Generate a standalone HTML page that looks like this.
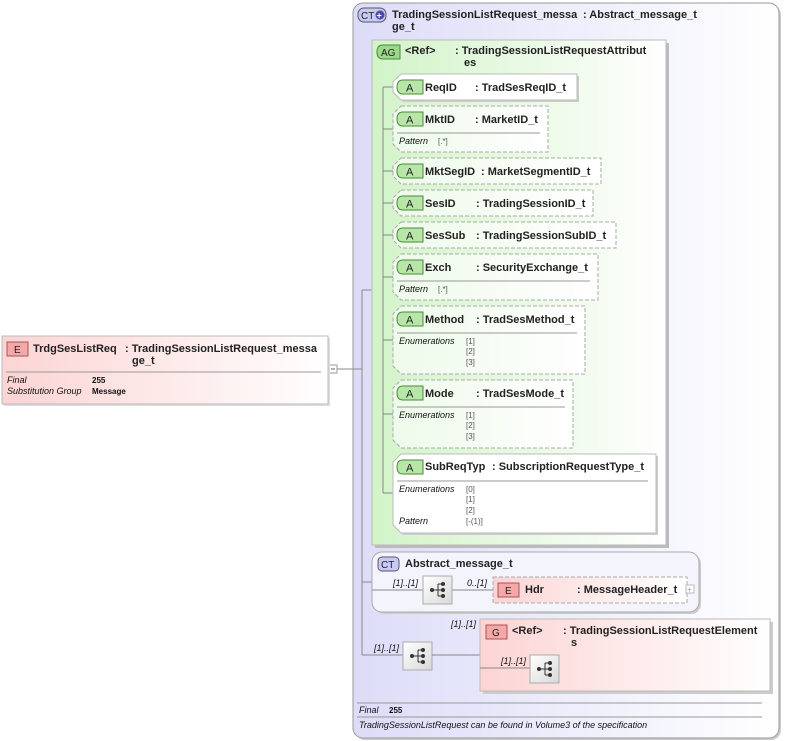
<!DOCTYPE html>
<html><head><meta charset="utf-8"><style>
html,body{margin:0;padding:0;background:#fff;width:785px;height:741px;overflow:hidden}
svg text{font-family:"Liberation Sans",Arial,sans-serif}
.b{font-size:11px;font-weight:bold;fill:#222}
.i{font-size:9px;font-style:italic;fill:#111}
.v{font-size:8px;fill:#555}
.vb{font-size:8px;font-weight:bold;fill:#111}
</style></head><body>
<svg width="785" height="741" xmlns="http://www.w3.org/2000/svg">
<defs>
<linearGradient id="ct" x1="0" x2="1"><stop offset="0" stop-color="#dcdcf8"/><stop offset="1" stop-color="#ffffff"/></linearGradient>
<linearGradient id="ag" x1="0" x2="1"><stop offset="0" stop-color="#d2f3c8"/><stop offset="1" stop-color="#ffffff"/></linearGradient>
<linearGradient id="el" x1="0" x2="1"><stop offset="0" stop-color="#fcd4d4"/><stop offset="1" stop-color="#ffffff"/></linearGradient>
<linearGradient id="at" x1="0" x2="1"><stop offset="0" stop-color="#eefaea"/><stop offset="1" stop-color="#ffffff"/></linearGradient>
<linearGradient id="sq" x1="0" x2="1" y1="0" y2="1"><stop offset="0" stop-color="#ffffff"/><stop offset="1" stop-color="#d8d8d8"/></linearGradient>
<g id="seq"><rect x="0" y="0" width="29" height="28" fill="url(#sq)" stroke="#aaa"/><line x1="9" y1="14" x2="15" y2="14" stroke="#333"/><line x1="15" y1="8" x2="15" y2="20" stroke="#333"/><line x1="15" y1="8" x2="19" y2="8" stroke="#333"/><line x1="15" y1="14" x2="19" y2="14" stroke="#333"/><line x1="15" y1="20" x2="19" y2="20" stroke="#333"/><circle cx="9" cy="14" r="2" fill="#333"/><circle cx="20" cy="8" r="2" fill="#333"/><circle cx="20" cy="14" r="2" fill="#333"/><circle cx="20" cy="20" r="2" fill="#333"/></g>
<g id="abadge"><path d="M6,0 H26 V14 H6 Q0,14 0,7 Q0,0 6,0 Z" fill="#b8e6a8" stroke="#4a8a3a"/><text x="9" y="11.5" style="font-size:11px;fill:#222">A</text></g>
</defs>

<rect x="355" y="5" width="426" height="735" rx="10" fill="#ccc"/>
<rect x="353" y="3" width="426" height="735" rx="10" fill="url(#ct)" stroke="#999"/>
<rect x="358" y="8" width="28" height="14" rx="6" fill="#c8c8f4" stroke="#556"/>
<text x="361" y="19" style="font-size:10px;fill:#222">CT</text><circle cx="380" cy="15" r="4.5" fill="#4a4aa8"/><text x="376.5" y="18.5" style="font-size:9px;fill:#fff;font-weight:bold">+</text>
<text class="b" x="392" y="18">TradingSessionListRequest_messa</text>
<text class="b" x="392" y="30">ge_t</text>
<text class="b" x="583" y="18">: Abstract_message_t</text>

<line x1="330" y1="369" x2="362" y2="369" stroke="#888"/>
<line x1="362" y1="290" x2="362" y2="655" stroke="#888"/>
<line x1="362" y1="290" x2="372" y2="290" stroke="#888"/>
<line x1="362" y1="582" x2="372" y2="582" stroke="#888"/>
<line x1="362" y1="655" x2="403" y2="655" stroke="#888"/>
<rect x="329" y="365" width="8" height="8" fill="#fff" stroke="#999"/><line x1="331" y1="369" x2="335" y2="369" stroke="#666"/>

<rect x="375" y="43" width="294" height="505" fill="#bbb"/>
<rect x="372" y="40" width="294" height="505" fill="url(#ag)" stroke="#bbb"/>
<path d="M383,45 H400 V59 H383 Q377,59 377,52 Q377,45 383,45 Z" fill="#9ad88a" stroke="#4a8a3a"/>
<text x="381" y="56" style="font-size:10px;fill:#222">AG</text>
<text class="b" x="405" y="54">&lt;Ref&gt;</text>
<text class="b" x="455" y="54">: TradingSessionListRequestAttribut</text>
<text class="b" x="464" y="66">es</text>
<line x1="383" y1="87" x2="383" y2="493" stroke="#888"/>

<g stroke="#888">
<line x1="383" y1="87" x2="393" y2="87"/><line x1="383" y1="129" x2="393" y2="129"/><line x1="383" y1="171" x2="393" y2="171"/><line x1="383" y1="203" x2="393" y2="203"/><line x1="383" y1="235" x2="393" y2="235"/><line x1="383" y1="277" x2="393" y2="277"/><line x1="383" y1="340" x2="393" y2="340"/><line x1="383" y1="414" x2="393" y2="414"/><line x1="383" y1="493" x2="393" y2="493"/>
</g>

<path d="M403,76 H579 V102 H403 L395,94 V84 Z" fill="#ccc"/>
<path d="M401,74 H577 V100 H401 L393,92 V82 Z" fill="#fff" stroke="#bbb"/>
<use href="#abadge" x="397" y="80"/><text class="b" x="425" y="91">ReqID</text><text class="b" x="475" y="91">: TradSesReqID_t</text>

<g fill="url(#at)" stroke="#aaa" stroke-dasharray="4,2">
<path d="M401,106 H548 V152 H401 L393,144 V114 Z"/>
<path d="M401,158 H601 V184 H401 L393,176 V166 Z"/>
<path d="M401,190 H593 V216 H401 L393,208 V198 Z"/>
<path d="M401,222 H616 V248 H401 L393,240 V230 Z"/>
<path d="M401,254 H598 V300 H401 L393,292 V262 Z"/>
<path d="M401,306 H585 V374 H401 L393,366 V314 Z"/>
<path d="M401,380 H573 V448 H401 L393,440 V388 Z"/>
</g>
<path d="M403,456 H658 V535 H403 L395,527 V464 Z" fill="#ccc"/>
<path d="M401,454 H656 V533 H401 L393,525 V462 Z" fill="#fff" stroke="#bbb"/>

<use href="#abadge" x="397" y="112"/><text class="b" x="425" y="123">MktID</text><text class="b" x="475" y="123">: MarketID_t</text>
<line x1="397" y1="133" x2="540" y2="133" stroke="#999"/><text class="i" x="399" y="144">Pattern</text><text class="v" x="438" y="144">[.*]</text>

<use href="#abadge" x="397" y="164"/><text class="b" x="425" y="175">MktSegID</text><text class="b" x="481" y="175">: MarketSegmentID_t</text>
<use href="#abadge" x="397" y="196"/><text class="b" x="425" y="207">SesID</text><text class="b" x="476" y="207">: TradingSessionID_t</text>
<use href="#abadge" x="397" y="228"/><text class="b" x="425" y="239">SesSub</text><text class="b" x="476" y="239">: TradingSessionSubID_t</text>
<use href="#abadge" x="397" y="260"/><text class="b" x="425" y="271">Exch</text><text class="b" x="476" y="271">: SecurityExchange_t</text>
<line x1="397" y1="281" x2="590" y2="281" stroke="#999"/><text class="i" x="399" y="292">Pattern</text><text class="v" x="438" y="292">[.*]</text>

<use href="#abadge" x="397" y="312"/><text class="b" x="425" y="323">Method</text><text class="b" x="476" y="323">: TradSesMethod_t</text>
<line x1="397" y1="333" x2="577" y2="333" stroke="#999"/><text class="i" x="399" y="344">Enumerations</text><text class="v" x="466" y="344">[1]</text><text class="v" x="466" y="354">[2]</text><text class="v" x="466" y="365">[3]</text>

<use href="#abadge" x="397" y="386"/><text class="b" x="425" y="397">Mode</text><text class="b" x="476" y="397">: TradSesMode_t</text>
<line x1="397" y1="407" x2="565" y2="407" stroke="#999"/><text class="i" x="399" y="418">Enumerations</text><text class="v" x="466" y="418">[1]</text><text class="v" x="466" y="428">[2]</text><text class="v" x="466" y="439">[3]</text>

<use href="#abadge" x="397" y="460"/><text class="b" x="425" y="470">SubReqTyp</text><text class="b" x="492" y="470">: SubscriptionRequestType_t</text>
<line x1="397" y1="481" x2="648" y2="481" stroke="#999"/><text class="i" x="399" y="492">Enumerations</text><text class="v" x="466" y="492">[0]</text><text class="v" x="466" y="502">[1]</text><text class="v" x="466" y="513">[2]</text>
<text class="i" x="399" y="524">Pattern</text><text class="v" x="466" y="524">[-(1)]</text>

<rect x="374" y="554" width="327" height="60" rx="10" fill="#ccc"/>
<rect x="372" y="552" width="327" height="60" rx="10" fill="#f4f4fd" stroke="#aaa"/>
<rect x="378" y="557" width="21" height="14" rx="4" fill="#c8c8f4" stroke="#556"/><text x="381" y="568" style="font-size:10px;fill:#222">CT</text>
<text class="b" x="405" y="567">Abstract_message_t</text>
<line x1="372" y1="590" x2="423" y2="590" stroke="#888"/>
<line x1="452" y1="590" x2="493" y2="590" stroke="#888"/>
<text class="i" x="393" y="586">[1]..[1]</text>
<text class="i" x="467" y="586">0..[1]</text>
<use href="#seq" x="423" y="576"/>
<rect x="493" y="577" width="194" height="26" fill="url(#el)" stroke="#aaa" stroke-dasharray="4,2"/>
<rect x="498" y="583" width="21" height="14" fill="#f4a8a8" stroke="#a55"/><text x="505" y="594" style="font-size:10px;fill:#222">E</text>
<text class="b" x="525" y="593">Hdr</text><text class="b" x="577" y="593">: MessageHeader_t</text>
<rect x="686" y="585" width="8" height="8" fill="#fff" stroke="#bbb"/><text x="687" y="592" style="font-size:8px;fill:#999">+</text>

<text class="i" x="451" y="627">[1]..[1]</text>
<text class="i" x="374" y="651">[1]..[1]</text>
<use href="#seq" x="403" y="642"/>
<line x1="432" y1="655" x2="480" y2="655" stroke="#888"/>
<rect x="483" y="622" width="290" height="72" fill="#ccc"/>
<rect x="480" y="619" width="290" height="72" fill="url(#el)" stroke="#bbb"/>
<rect x="486" y="625" width="21" height="14" fill="#f4a8a8" stroke="#a55"/><text x="492" y="636" style="font-size:10px;fill:#222">G</text>
<text class="b" x="512" y="634">&lt;Ref&gt;</text><text class="b" x="563" y="634">: TradingSessionListRequestElement</text>
<text class="b" x="571" y="646">s</text>
<text class="i" x="501" y="664">[1]..[1]</text>
<line x1="480" y1="668" x2="530" y2="668" stroke="#888"/>
<use href="#seq" x="530" y="655"/>

<line x1="357" y1="703" x2="762" y2="703" stroke="#999"/>
<text class="i" x="359" y="713">Final</text><text class="vb" x="389" y="713">255</text>
<line x1="357" y1="717" x2="762" y2="717" stroke="#999"/>
<text class="i" x="359" y="728">TradingSessionListRequest can be found in Volume3 of the specification</text>

<rect x="4" y="338" width="326" height="68" fill="#ddd"/>
<rect x="2" y="336" width="326" height="68" fill="url(#el)" stroke="#bbb"/>
<rect x="7" y="342" width="21" height="14" fill="#f4a8a8" stroke="#a55"/><text x="14" y="353" style="font-size:10px;fill:#222">E</text>
<text class="b" x="33" y="352">TrdgSesListReq</text><text class="b" x="125" y="352">: TradingSessionListRequest_messa</text>
<text class="b" x="132" y="364">ge_t</text>
<line x1="6" y1="372" x2="321" y2="372" stroke="#999"/>
<text class="i" x="7" y="383">Final</text><text class="vb" x="92" y="383">255</text>
<text class="i" x="7" y="394">Substitution Group</text><text class="vb" x="92" y="394">Message</text>
</svg>
</body></html>
